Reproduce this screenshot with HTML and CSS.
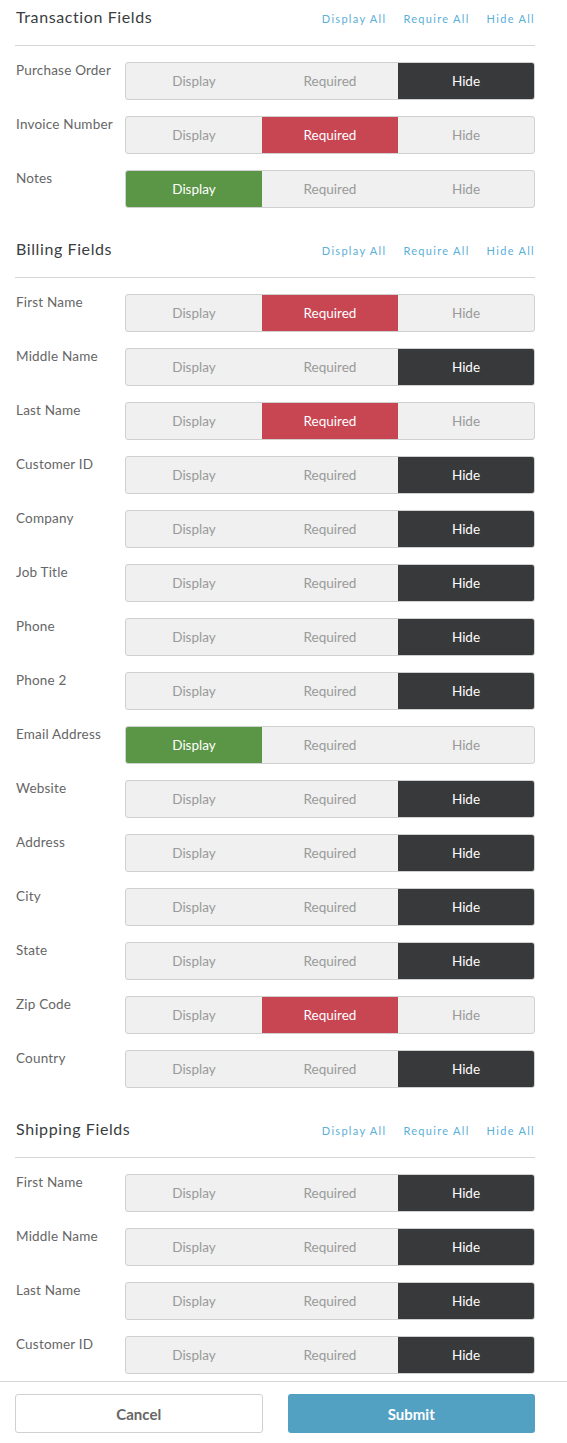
FILE: index.html
```html
<!DOCTYPE html>
<html lang="en">
<head>
    <meta charset="UTF-8">
    <meta name="viewport" content="width=device-width, initial-scale=1.0">
    <title>Field Settings</title>
    <link rel="stylesheet" href="styles.css">
</head>
<body>
    <div class="container">
        <div class="section">
            <div class="section-head">
                <h2>Transaction Fields</h2>
                <div class="bulk-links">
                    <a href="#">Display All</a>
                    <a href="#">Require All</a>
                    <a href="#">Hide All</a>
                </div>
            </div>
            <div class="field-row">
                <label>Purchase Order</label>
                <div class="toggle"><span>Display</span><span>Required</span><span class="active hide">Hide</span></div>
            </div>
            <div class="field-row">
                <label>Invoice Number</label>
                <div class="toggle"><span>Display</span><span class="active required">Required</span><span>Hide</span></div>
            </div>
            <div class="field-row">
                <label>Notes</label>
                <div class="toggle"><span class="active display">Display</span><span>Required</span><span>Hide</span></div>
            </div>
        </div>

        <div class="section">
            <div class="section-head">
                <h2>Billing Fields</h2>
                <div class="bulk-links">
                    <a href="#">Display All</a>
                    <a href="#">Require All</a>
                    <a href="#">Hide All</a>
                </div>
            </div>
            <div class="field-row">
                <label>First Name</label>
                <div class="toggle"><span>Display</span><span class="active required">Required</span><span>Hide</span></div>
            </div>
            <div class="field-row">
                <label>Middle Name</label>
                <div class="toggle"><span>Display</span><span>Required</span><span class="active hide">Hide</span></div>
            </div>
            <div class="field-row">
                <label>Last Name</label>
                <div class="toggle"><span>Display</span><span class="active required">Required</span><span>Hide</span></div>
            </div>
            <div class="field-row">
                <label>Customer ID</label>
                <div class="toggle"><span>Display</span><span>Required</span><span class="active hide">Hide</span></div>
            </div>
            <div class="field-row">
                <label>Company</label>
                <div class="toggle"><span>Display</span><span>Required</span><span class="active hide">Hide</span></div>
            </div>
            <div class="field-row">
                <label>Job Title</label>
                <div class="toggle"><span>Display</span><span>Required</span><span class="active hide">Hide</span></div>
            </div>
            <div class="field-row">
                <label>Phone</label>
                <div class="toggle"><span>Display</span><span>Required</span><span class="active hide">Hide</span></div>
            </div>
            <div class="field-row">
                <label>Phone 2</label>
                <div class="toggle"><span>Display</span><span>Required</span><span class="active hide">Hide</span></div>
            </div>
            <div class="field-row">
                <label>Email Address</label>
                <div class="toggle"><span class="active display">Display</span><span>Required</span><span>Hide</span></div>
            </div>
            <div class="field-row">
                <label>Website</label>
                <div class="toggle"><span>Display</span><span>Required</span><span class="active hide">Hide</span></div>
            </div>
            <div class="field-row">
                <label>Address</label>
                <div class="toggle"><span>Display</span><span>Required</span><span class="active hide">Hide</span></div>
            </div>
            <div class="field-row">
                <label>City</label>
                <div class="toggle"><span>Display</span><span>Required</span><span class="active hide">Hide</span></div>
            </div>
            <div class="field-row">
                <label>State</label>
                <div class="toggle"><span>Display</span><span>Required</span><span class="active hide">Hide</span></div>
            </div>
            <div class="field-row">
                <label>Zip Code</label>
                <div class="toggle"><span>Display</span><span class="active required">Required</span><span>Hide</span></div>
            </div>
            <div class="field-row">
                <label>Country</label>
                <div class="toggle"><span>Display</span><span>Required</span><span class="active hide">Hide</span></div>
            </div>
        </div>

        <div class="section">
            <div class="section-head">
                <h2>Shipping Fields</h2>
                <div class="bulk-links">
                    <a href="#">Display All</a>
                    <a href="#">Require All</a>
                    <a href="#">Hide All</a>
                </div>
            </div>
            <div class="field-row">
                <label>First Name</label>
                <div class="toggle"><span>Display</span><span>Required</span><span class="active hide">Hide</span></div>
            </div>
            <div class="field-row">
                <label>Middle Name</label>
                <div class="toggle"><span>Display</span><span>Required</span><span class="active hide">Hide</span></div>
            </div>
            <div class="field-row">
                <label>Last Name</label>
                <div class="toggle"><span>Display</span><span>Required</span><span class="active hide">Hide</span></div>
            </div>
            <div class="field-row">
                <label>Customer ID</label>
                <div class="toggle"><span>Display</span><span>Required</span><span class="active hide">Hide</span></div>
            </div>
        </div>
    </div>

    <div class="footer">
        <button type="button" class="btn-cancel">Cancel</button>
        <button type="submit" class="btn-submit">Submit</button>
    </div>
</body>
</html>
```

FILE: styles.css
```css
body {
    font-family: Lato, "Open Sans", Arial, sans-serif;
    margin: 0;
    padding: 0;
    background-color: #fff;
    color: #333;
}

.container {
    padding: 0 32px 7px 15px;
}

.section + .section {
    margin-top: 24px;
}

.section-head {
    display: flex;
    justify-content: space-between;
    align-items: baseline;
    padding: 6px 0 17px 1px;
    border-bottom: 1px solid #d6d6d6;
    margin-bottom: 16px;
}

h2 {
    margin: 0;
    font-size: 16px;
    font-weight: 400;
    line-height: 22px;
    letter-spacing: 0.6px;
    color: #3a3d40;
}

.bulk-links {
    display: flex;
    gap: 17px;
}

.bulk-links a {
    font-size: 11px;
    letter-spacing: 1.3px;
    color: #5ab0d6;
    text-decoration: none;
}

.field-row {
    display: grid;
    grid-template-columns: 110px 1fr;
    margin-bottom: 16px;
}

.field-row:last-child {
    margin-bottom: 0;
}

.field-row label {
    margin-top: -1px;
    padding: 0 0 0 1px;
    font-size: 13.5px;
    line-height: 18px;
    letter-spacing: 0.2px;
    color: #666;
}

.toggle {
    display: grid;
    grid-template-columns: 1fr 1fr 1fr;
    height: 38px;
    border: 1px solid #cfd1d1;
    border-radius: 3px;
    background-color: #eff0ef;
    overflow: hidden;
    box-sizing: border-box;
}

.toggle span {
    display: flex;
    align-items: center;
    justify-content: center;
    font-size: 13.5px;
    color: #9a9a9a;
    cursor: pointer;
}

.toggle span.active {
    color: #fff;
}

.toggle span.display {
    background-color: #5b9647;
}

.toggle span.required {
    background-color: #c84552;
}

.toggle span.hide {
    background-color: #37393b;
}

.footer {
    display: grid;
    grid-template-columns: 1fr 1fr;
    gap: 25px;
    padding: 12px 32px 10px 15px;
    border-top: 1px solid #d6d6d6;
}

.footer button {
    height: 39px;
    border-radius: 3px;
    font-family: Lato, Arial, sans-serif;
    font-size: 15px;
    font-weight: 700;
    cursor: pointer;
}

.btn-cancel {
    background-color: #fff;
    border: 1px solid #cfd1d1;
    color: #666;
}

.btn-submit {
    background-color: #52a1c3;
    border: none;
    color: #fff;
}
```
